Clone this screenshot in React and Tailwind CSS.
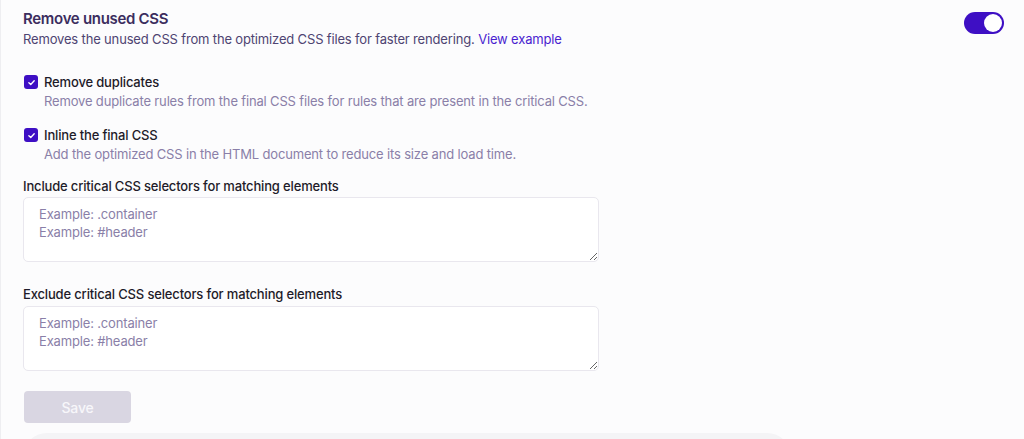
import React, { useState } from "react";

export default function App() {
  const [enabled, setEnabled] = useState(true);
  const [dupes, setDupes] = useState(true);
  const [inline, setInline] = useState(true);

  const Check = ({ checked, onChange }) => (
    <button
      onClick={onChange}
      className={`mt-[3px] flex h-[14px] w-[14px] shrink-0 items-center justify-center rounded-[3px] ${
        checked ? "bg-[#3e0fc4]" : "border border-[#c9c4d6] bg-white"
      }`}
    >
      {checked && (
        <svg width="9" height="9" viewBox="0 0 12 12" fill="none">
          <path d="M2.5 6.3 5 8.6 9.6 3.6" stroke="white" strokeWidth="1.8" strokeLinecap="round" strokeLinejoin="round" />
        </svg>
      )}
    </button>
  );

  return (
    <div className="min-h-screen border-l border-[#eeeef1] bg-[#fcfcfd] font-['Inter',sans-serif] tracking-[-0.01em] overflow-hidden">
      <div className="px-[22px] pt-[8px]">
        {/* Header */}
        <div className="flex items-start justify-between">
          <div>
            <h2 className="text-[15px] leading-[22px] font-semibold tracking-[-0.02em] text-[#3b2d5e]">Remove unused CSS</h2>
            <p className="text-[13px] leading-[18px] text-[#4e4472]">
              Removes the unused CSS from the optimized CSS files for faster rendering.{" "}
              <a href="#" className="text-[#4a1fd0]">View example</a>
            </p>
          </div>
          <button
            onClick={() => setEnabled(!enabled)}
            className={`mt-[4px] mr-[-2px] flex h-[22px] w-[40px] items-center rounded-full p-[2px] ${
              enabled ? "justify-end bg-[#3e0fc4]" : "justify-start bg-[#d9d6e2]"
            }`}
          >
            <span className="h-[18px] w-[18px] rounded-full bg-white" />
          </button>
        </div>

        {/* Options */}
        <div className="mt-[24px] flex flex-col gap-[15px] pl-[1px]">
          <div className="flex gap-[6px]">
            <Check checked={dupes} onChange={() => setDupes(!dupes)} />
            <div>
              <div className="text-[13px] leading-[20px] font-medium text-[#1e1b29]">Remove duplicates</div>
              <div className="text-[13px] leading-[18px] text-[#8a7fa8]">
                Remove duplicate rules from the final CSS files for rules that are present in the critical CSS.
              </div>
            </div>
          </div>
          <div className="flex gap-[6px]">
            <Check checked={inline} onChange={() => setInline(!inline)} />
            <div>
              <div className="text-[13px] leading-[20px] font-medium text-[#1e1b29]">Inline the final CSS</div>
              <div className="text-[13px] leading-[18px] text-[#8a7fa8]">
                Add the optimized CSS in the HTML document to reduce its size and load time.
              </div>
            </div>
          </div>
        </div>

        {/* Selectors */}
        <div className="mt-[13px]">
          <label className="block text-[13px] leading-[20px] font-medium text-[#1e1b29]">
            Include critical CSS selectors for matching elements
          </label>
          <textarea
            placeholder={"Example: .container\nExample: #header"}
            className="mt-[1px] block h-[65px] w-[576px] rounded-[5px] border border-[#e9e7ee] bg-white px-[15px] py-[7px] text-[13px] leading-[18px] text-[#1e1b29] outline-none placeholder:text-[#8a7fa8]"
          />
        </div>
        <div className="mt-[22px]">
          <label className="block text-[13px] leading-[20px] font-medium text-[#1e1b29]">
            Exclude critical CSS selectors for matching elements
          </label>
          <textarea
            placeholder={"Example: .container\nExample: #header"}
            className="mt-[2px] block h-[65px] w-[576px] rounded-[5px] border border-[#e9e7ee] bg-white px-[15px] py-[7px] text-[13px] leading-[18px] text-[#1e1b29] outline-none placeholder:text-[#8a7fa8]"
          />
        </div>

        <button
          disabled
          className="mt-[20px] ml-[1px] h-[32px] w-[107px] rounded-[4px] bg-[#d9d6e2] text-[14px] font-medium text-[#f7f6fa]"
        >
          Save
        </button>

        <div className="mt-[10px] h-[24px] w-[768px] rounded-t-[24px] bg-[#f4f4f6]" />
      </div>
    </div>
  );
}
